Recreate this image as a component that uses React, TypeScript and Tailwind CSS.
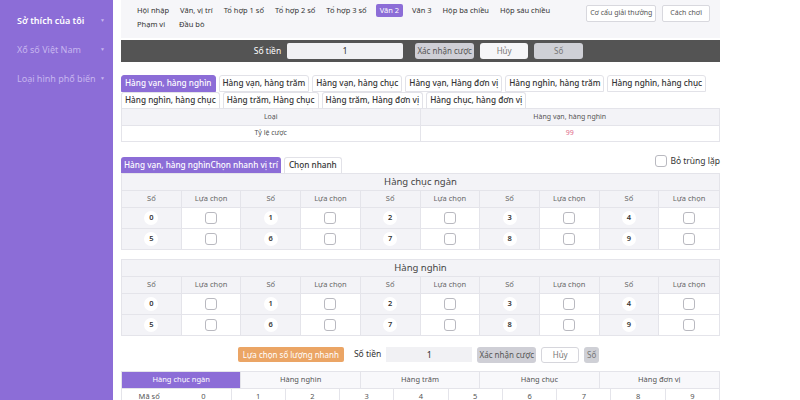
import React from "react";

const navRow1 = ["Hội nhập", "Văn, vị trí", "Tổ hợp 1 số", "Tổ hợp 2 số", "Tổ hợp 3 số", "Văn 2", "Văn 3", "Hộp ba chiều", "Hộp sáu chiều"];
const navRow2 = ["Phạm vi", "Đầu bò"];

const tabsRow1 = ["Hàng vạn, hàng nghìn", "Hàng vạn, hàng trăm", "Hàng vạn, hàng chục", "Hàng vạn, Hàng đơn vị", "Hàng nghìn, hàng trăm", "Hàng nghìn, hàng chục"];
const tabsRow2 = ["Hàng nghìn, hàng chục", "Hàng trăm, Hàng chục", "Hàng trăm, Hàng đơn vị", "Hàng chục, hàng đơn vị"];

const places = ["Hàng chục ngàn", "Hàng nghìn", "Hàng trăm", "Hàng chục", "Hàng đơn vị"];

function Box() {
  return <span className="inline-block h-[12px] w-[12px] shrink-0 rounded-[3px] border border-[#b9b9c0] bg-white" />;
}

function DigitGrid({ title }: { title: string }) {
  const rows = [
    [0, 1, 2, 3, 4],
    [5, 6, 7, 8, 9],
  ];
  return (
    <div className="border border-[#e4e4ea]">
      <div className="flex h-[17px] items-center justify-center border-b border-[#e4e4ea] bg-[#f3f3f7] text-[9.5px] text-[#444]">
        {title}
      </div>
      <div className="grid grid-cols-10 border-b border-[#e4e4ea] bg-[#f3f3f7] text-[7.5px] text-[#666]">
        {Array.from({ length: 10 }).map((_, i) => (
          <div key={i} className="flex h-[16px] items-center justify-center whitespace-nowrap border-r border-[#e4e4ea] last:border-r-0">
            {i % 2 === 0 ? "Số" : "Lựa chọn"}
          </div>
        ))}
      </div>
      {rows.map((row, ri) => (
        <div key={ri} className={"grid grid-cols-10 " + (ri === 0 ? "border-b border-[#e4e4ea]" : "")}>
          {row.map((n) => (
            <React.Fragment key={n}>
              <div className="flex h-[20px] items-center justify-center border-r border-[#e4e4ea] bg-[#f3f3f7]">
                <span className="flex h-[14px] w-[14px] items-center justify-center rounded-full bg-white text-[7.5px] font-semibold text-[#333]">
                  {n}
                </span>
              </div>
              <div className="flex h-[20px] items-center justify-center border-r border-[#e4e4ea] bg-white last:border-r-0">
                <Box />
              </div>
            </React.Fragment>
          ))}
        </div>
      ))}
    </div>
  );
}

export default function App() {
  return (
    <div className="flex h-[400px] w-[800px] overflow-hidden whitespace-nowrap bg-white text-[#333]" style={{ fontFamily: '"Noto Sans", "Open Sans", sans-serif' }}>
      {/* sidebar */}
      <aside className="h-full w-[113px] shrink-0 bg-[#8c6dd7] pl-[17px] pr-[8px] pt-[6px] text-[9px]">
        {[
          ["Sở thích của tôi", "text-white font-semibold"],
          ["Xổ số Việt Nam", "text-[#c7b6ef]"],
          ["Loại hình phổ biến", "text-[#c7b6ef]"],
        ].map(([label, cls]) => (
          <div key={label} className={"flex h-[29px] items-center justify-between " + cls}>
            <span>{label}</span>
            <span className="text-[5px] text-[#c7b6ef]">▼</span>
          </div>
        ))}
      </aside>

      <main className="ml-[8px] w-[599px] shrink-0">
        {/* top nav */}
        <div className="flex h-[38px] items-start justify-between bg-[#f6f6f9] pl-[16px] pr-[10px] pt-[4px]">
          <div className="flex flex-col gap-[2px] text-[7.5px] text-[#333]">
            <div className="flex items-center gap-[11px]">
              {navRow1.map((t) => (
                <span key={t} className={"py-[1px] leading-[11px] " + (t === "Văn 2" ? "-mx-[2px] rounded-[2px] bg-[#8c6dd7] px-[4px] text-white" : "")}>
                  {t}
                </span>
              ))}
            </div>
            <div className="flex items-center gap-[14px]">
              {navRow2.map((t) => (
                <span key={t} className="leading-[11px]">{t}</span>
              ))}
            </div>
          </div>
          <div className="flex gap-[6px] pt-[1px]">
            <span className="rounded-[2px] border border-[#d8d8de] bg-white px-[3px] py-[2px] text-[7px] text-[#555]">Cơ cấu giải thưởng</span>
            <span className="rounded-[2px] border border-[#d8d8de] bg-white px-[7px] py-[2px] text-[7px] text-[#555]">Cách chơi</span>
          </div>
        </div>

        {/* dark bet bar */}
        <div className="mt-[2px] flex h-[22px] items-center justify-center gap-[6px] bg-[#545454] pr-[4px] text-[8.5px]">
          <span className="text-white">Số tiền</span>
          <span className="flex h-[16px] w-[116px] items-center justify-center rounded-[2px] bg-[#f1f1f4] text-[9px] text-[#333]">1</span>
          <span className="ml-[6px] flex h-[16px] w-[59px] items-center justify-center rounded-[3px] bg-[#cfcfd6] text-[8px] text-[#555]">Xác nhận cược</span>
          <span className="flex h-[16px] w-[48px] items-center justify-center rounded-[3px] bg-[#f6f6f8] text-[8px] text-[#777]">Hủy</span>
          <span className="flex h-[16px] w-[49px] items-center justify-center rounded-[3px] bg-[#cfd0d6] text-[8px] text-[#777]">Số</span>
        </div>

        {/* tabs */}
        <div className="mt-[13px] flex flex-col">
          <div className="flex gap-[3px]">
            {tabsRow1.map((t, i) => (
              <span
                key={t + i}
                className={
                  "flex h-[17px] items-center rounded-t-[3px] border px-[3px] text-[8.2px] font-medium " +
                  (i === 0 ? "border-[#8c6dd7] bg-[#8c6dd7] text-white" : "border-[#e2e2e8] bg-white text-[#333]")
                }
              >
                {t}
              </span>
            ))}
          </div>
          <div className="flex gap-[3px]">
            {tabsRow2.map((t) => (
              <span key={t} className="flex h-[16px] items-center rounded-t-[3px] border border-b-0 border-[#e2e2e8] bg-white px-[3px] text-[8.2px] font-medium text-[#333]">
                {t}
              </span>
            ))}
          </div>
        </div>

        {/* odds table */}
        <div className="border border-[#e4e4ea] text-[7px] text-[#555]">
          <div className="grid grid-cols-2 border-b border-[#e4e4ea] bg-[#f3f3f7]">
            <div className="flex h-[16px] items-center justify-center border-r border-[#e4e4ea]">Loại</div>
            <div className="flex h-[16px] items-center justify-center">Hàng vạn, hàng nghìn</div>
          </div>
          <div className="grid grid-cols-2 bg-white">
            <div className="flex h-[15px] items-center justify-center border-r border-[#e4e4ea]">Tỷ lệ cược</div>
            <div className="flex h-[15px] items-center justify-center text-[#e06b8a]">99</div>
          </div>
        </div>

        {/* quick select tabs */}
        <div className="mt-[13px] flex items-end justify-between">
          <div className="flex gap-[3px]">
            <span className="flex h-[16px] items-center rounded-t-[3px] bg-[#8c6dd7] px-[3px] text-[8.2px] font-medium text-white">Hàng vạn, hàng nghìnChọn nhanh vị trí</span>
            <span className="flex h-[16px] items-center rounded-t-[3px] border border-b-0 border-[#e2e2e8] bg-white px-[4px] text-[8.2px] font-medium text-[#333]">Chọn nhanh</span>
          </div>
          <label className="mb-[5px] flex items-center gap-[3px] text-[8.5px] text-[#333]">
            <Box />
            Bỏ trùng lặp
          </label>
        </div>

        <DigitGrid title="Hàng chục ngàn" />
        <div className="mt-[9px]">
          <DigitGrid title="Hàng nghìn" />
        </div>

        {/* bottom bet controls */}
        <div className="mt-[11px] flex h-[16px] items-center justify-center gap-[5px] pr-[4px] text-[8.5px]">
          <span className="flex h-[15px] items-center rounded-[2px] bg-[#eba565] px-[5px] text-[8px] text-white">Lựa chọn số lượng nhanh</span>
          <span className="ml-[5px] text-[#333]">Số tiền</span>
          <span className="flex h-[15px] w-[86px] items-center justify-center bg-[#f1f1f4] text-[9px]">1</span>
          <span className="flex h-[16px] w-[59px] items-center justify-center rounded-[3px] bg-[#cfcfd6] text-[8px] text-[#555]">Xác nhận cược</span>
          <span className="flex h-[16px] w-[38px] items-center justify-center rounded-[3px] border border-[#d6d6dc] bg-white text-[8px] text-[#777]">Hủy</span>
          <span className="flex h-[16px] w-[15px] items-center justify-center rounded-[3px] bg-[#cfd0d6] text-[8px] text-[#777]">Số</span>
        </div>

        {/* place / code table */}
        <div className="mt-[8px] border border-[#e4e4ea] text-[7.5px] text-[#555]">
          <div className="grid grid-cols-5 border-b border-[#e4e4ea]">
            {places.map((p, i) => (
              <div
                key={p}
                className={
                  "flex h-[16px] items-center justify-center border-r border-[#e4e4ea] last:border-r-0 " +
                  (i === 0 ? "bg-[#8c6dd7] text-white" : "bg-[#f8f8fb]")
                }
              >
                {p}
              </div>
            ))}
          </div>
          <div className="grid grid-cols-11">
            {["Mã số", "0", "1", "2", "3", "4", "5", "6", "7", "8", "9"].map((c, i) => (
              <div key={c} className={"flex h-[16px] items-center justify-center " + (i >= 2 ? "border-l border-[#e4e4ea]" : "")}>
                {c}
              </div>
            ))}
          </div>
        </div>
      </main>
    </div>
  );
}
